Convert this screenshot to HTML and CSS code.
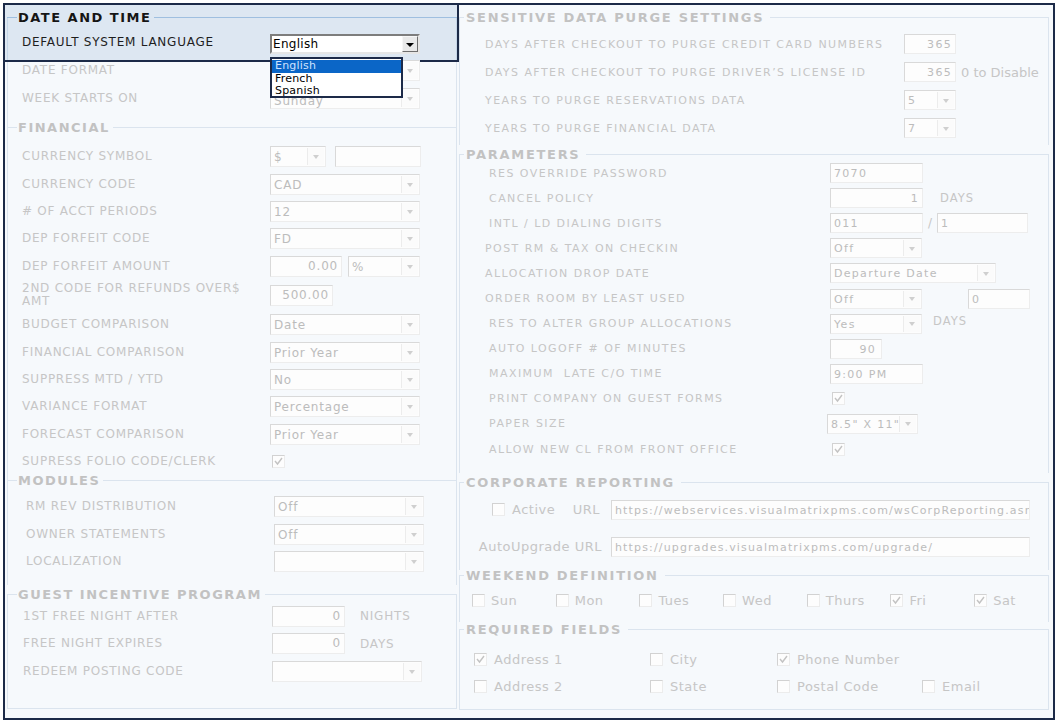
FILE: index.html
```html
<!DOCTYPE html>
<html>
<head>
<meta charset="utf-8">
<title>Settings</title>
<link rel="stylesheet" href="styles.css">
</head>
<body>
<div class="frame">
  <div class="col col-left">
    <div class="hl">
      <div class="hl-box">
        <div class="legend hl-legend"><span>DATE AND TIME</span></div>
        <div class="row lrow hl-row">
          <span class="lbl">DEFAULT SYSTEM LANGUAGE</span>
          <div class="sel hl-sel w150">
            <span class="val">English</span><span class="btn"></span>
            <ul class="dropdown">
              <li class="on">English</li>
              <li>French</li>
              <li>Spanish</li>
            </ul>
          </div>
        </div>
      </div>
    </div>

    <div class="group g-date">
      <div class="rows">
        <div class="row lrow"><span class="lbl">DATE FORMAT</span><div class="sel w150"><span class="val"></span><span class="btn"></span></div></div>
        <div class="row lrow"><span class="lbl">WEEK STARTS ON</span><div class="sel w150"><span class="val low">Sunday</span><span class="btn"></span></div></div>
      </div>
    </div>

    <div class="group g-fin">
      <div class="legend"><span>FINANCIAL</span></div>
      <div class="rows">
        <div class="row frow"><span class="lbl">CURRENCY SYMBOL</span><div class="sel w56"><span class="val">$</span><span class="btn"></span></div><div class="txt w86 ml9"></div></div>
        <div class="row frow"><span class="lbl">CURRENCY CODE</span><div class="sel w150"><span class="val">CAD</span><span class="btn"></span></div></div>
        <div class="row frow"><span class="lbl"># OF ACCT PERIODS</span><div class="sel w150"><span class="val">12</span><span class="btn"></span></div></div>
        <div class="row frow"><span class="lbl">DEP FORFEIT CODE</span><div class="sel w150"><span class="val">FD</span><span class="btn"></span></div></div>
        <div class="row frow"><span class="lbl">DEP FORFEIT AMOUNT</span><div class="txt w72 ra">0.00</div><div class="sel w72 ml6"><span class="val">%</span><span class="btn"></span></div></div>
        <div class="row frow two"><span class="lbl">2ND CODE FOR REFUNDS OVER$<br>AMT</span><div class="txt w63 ra">500.00</div></div>
        <div class="row frow"><span class="lbl">BUDGET COMPARISON</span><div class="sel w150"><span class="val">Date</span><span class="btn"></span></div></div>
        <div class="row frow"><span class="lbl">FINANCIAL COMPARISON</span><div class="sel w150"><span class="val">Prior Year</span><span class="btn"></span></div></div>
        <div class="row frow"><span class="lbl">SUPPRESS MTD / YTD</span><div class="sel w150"><span class="val">No</span><span class="btn"></span></div></div>
        <div class="row frow"><span class="lbl">VARIANCE FORMAT</span><div class="sel w150"><span class="val">Percentage</span><span class="btn"></span></div></div>
        <div class="row frow"><span class="lbl">FORECAST COMPARISON</span><div class="sel w150"><span class="val">Prior Year</span><span class="btn"></span></div></div>
        <div class="row frow"><span class="lbl">SUPRESS FOLIO CODE/CLERK</span><span class="cb on ml2"><svg viewBox="0 0 11 11" width="11" height="11"><polyline points="2,5 4.5,8 9,2"/></svg></span></div>
      </div>
    </div>

    <div class="group g-mod">
      <div class="legend"><span>MODULES</span></div>
      <div class="rows">
        <div class="row mrow"><span class="lbl">RM REV DISTRIBUTION</span><div class="sel w150"><span class="val">Off</span><span class="btn"></span></div></div>
        <div class="row mrow"><span class="lbl">OWNER STATEMENTS</span><div class="sel w150"><span class="val">Off</span><span class="btn"></span></div></div>
        <div class="row mrow"><span class="lbl">LOCALIZATION</span><div class="sel w150"><span class="val"></span><span class="btn"></span></div></div>
      </div>
    </div>

    <div class="group g-guest last">
      <div class="legend"><span>GUEST INCENTIVE PROGRAM</span></div>
      <div class="rows">
        <div class="row grow"><span class="lbl">1ST FREE NIGHT AFTER</span><div class="txt w73 ra">0</div><span class="unit ml15">NIGHTS</span></div>
        <div class="row grow"><span class="lbl">FREE NIGHT EXPIRES</span><div class="txt w73 ra">0</div><span class="unit ml15">DAYS</span></div>
        <div class="row grow"><span class="lbl">REDEEM POSTING CODE</span><div class="sel w150"><span class="val"></span><span class="btn"></span></div></div>
      </div>
    </div>
  </div>

  <div class="col col-right">
    <div class="group g-sens">
      <div class="legend"><span>SENSITIVE DATA PURGE SETTINGS</span></div>
      <div class="rows">
        <div class="row srow"><span class="lbl">DAYS AFTER CHECKOUT TO PURGE CREDIT CARD NUMBERS</span><div class="txt w52 ra">365</div></div>
        <div class="row srow"><span class="lbl">DAYS AFTER CHECKOUT TO PURGE DRIVER’S LICENSE ID</span><div class="txt w52 ra">365</div><span class="note">0 to Disable</span></div>
        <div class="row srow"><span class="lbl">YEARS TO PURGE RESERVATIONS DATA</span><div class="sel w52"><span class="val">5</span><span class="btn"></span></div></div>
        <div class="row srow"><span class="lbl">YEARS TO PURGE FINANCIAL DATA</span><div class="sel w52"><span class="val">7</span><span class="btn"></span></div></div>
      </div>
    </div>

    <div class="group g-par">
      <div class="legend"><span>PARAMETERS</span></div>
      <div class="rows">
        <div class="row prow"><span class="lbl">RES OVERRIDE PASSWORD</span><div class="txt w93">7070</div></div>
        <div class="row prow"><span class="lbl">CANCEL POLICY</span><div class="txt w93 ra">1</div><span class="unit ml17">DAYS</span></div>
        <div class="row prow"><span class="lbl">INTL / LD DIALING DIGITS</span><div class="txt w93">011</div><span class="slash">/</span><div class="txt w91">1</div></div>
        <div class="row prow in"><span class="lbl">POST RM &amp; TAX ON CHECKIN</span><div class="sel w92"><span class="val">Off</span><span class="btn"></span></div></div>
        <div class="row prow in"><span class="lbl">ALLOCATION DROP DATE</span><div class="sel w166"><span class="val">Departure Date</span><span class="btn"></span></div></div>
        <div class="row prow in"><span class="lbl">ORDER ROOM BY LEAST USED</span><div class="sel w92"><span class="val">Off</span><span class="btn"></span></div><div class="txt w62 ml46">0</div></div>
        <div class="row prow"><span class="lbl">RES TO ALTER GROUP ALLOCATIONS</span><div class="sel w92"><span class="val">Yes</span><span class="btn"></span></div><span class="unit ml11 up">DAYS</span></div>
        <div class="row prow"><span class="lbl">AUTO LOGOFF # OF MINUTES</span><div class="txt w52 ra pr5">90</div></div>
        <div class="row prow"><span class="lbl">MAXIMUM&nbsp; LATE C/O TIME</span><div class="txt w93">9:00 PM</div></div>
        <div class="row prow"><span class="lbl">PRINT COMPANY ON GUEST FORMS</span><span class="cb on ml2"><svg viewBox="0 0 11 11" width="11" height="11"><polyline points="2,5 4.5,8 9,2"/></svg></span></div>
        <div class="row prow"><span class="lbl">PAPER SIZE</span><div class="sel w91 mlm3"><span class="val">8.5" X 11"</span><span class="btn"></span></div></div>
        <div class="row prow"><span class="lbl">ALLOW NEW CL FROM FRONT OFFICE</span><span class="cb on ml2"><svg viewBox="0 0 11 11" width="11" height="11"><polyline points="2,5 4.5,8 9,2"/></svg></span></div>
      </div>
    </div>

    <div class="group g-corp">
      <div class="legend"><span>CORPORATE REPORTING</span></div>
      <div class="rows">
        <div class="row crow">
          <div class="clbl"><span class="cb"></span><span class="mix ml7">Active</span><span class="mix push">URL</span></div>
          <div class="txt w419 url">https://webservices.visualmatrixpms.com/wsCorpReporting.asmx</div>
        </div>
        <div class="row crow c2">
          <div class="clbl end"><span class="mix">AutoUpgrade URL</span></div>
          <div class="txt w419 url">https://upgrades.visualmatrixpms.com/upgrade/</div>
        </div>
      </div>
    </div>

    <div class="group g-week">
      <div class="legend"><span>WEEKEND DEFINITION</span></div>
      <div class="rows">
        <div class="row wrow">
          <span class="day"><span class="cb"></span><span class="mix">Sun</span></span>
          <span class="day"><span class="cb"></span><span class="mix">Mon</span></span>
          <span class="day"><span class="cb"></span><span class="mix">Tues</span></span>
          <span class="day"><span class="cb"></span><span class="mix">Wed</span></span>
          <span class="day"><span class="cb"></span><span class="mix">Thurs</span></span>
          <span class="day"><span class="cb on"><svg viewBox="0 0 11 11" width="11" height="11"><polyline points="2,5 4.5,8 9,2"/></svg></span><span class="mix">Fri</span></span>
          <span class="day"><span class="cb on"><svg viewBox="0 0 11 11" width="11" height="11"><polyline points="2,5 4.5,8 9,2"/></svg></span><span class="mix">Sat</span></span>
        </div>
      </div>
    </div>

    <div class="group g-req last">
      <div class="legend"><span>REQUIRED FIELDS</span></div>
      <div class="rows">
        <div class="row rrow">
          <span class="fld f1"><span class="cb on"><svg viewBox="0 0 11 11" width="11" height="11"><polyline points="2,5 4.5,8 9,2"/></svg></span><span class="mix">Address 1</span></span>
          <span class="fld f2"><span class="cb"></span><span class="mix">City</span></span>
          <span class="fld f3"><span class="cb on"><svg viewBox="0 0 11 11" width="11" height="11"><polyline points="2,5 4.5,8 9,2"/></svg></span><span class="mix">Phone Number</span></span>
        </div>
        <div class="row rrow">
          <span class="fld f1"><span class="cb"></span><span class="mix">Address 2</span></span>
          <span class="fld f2"><span class="cb"></span><span class="mix">State</span></span>
          <span class="fld f3"><span class="cb"></span><span class="mix">Postal Code</span></span>
          <span class="fld f4"><span class="cb"></span><span class="mix">Email</span></span>
        </div>
      </div>
    </div>
  </div>
</div>
</body>
</html>
```

FILE: styles.css
```css
* { box-sizing: border-box; }
html, body { margin: 0; padding: 0; background: #ffffff; }
body {
  width: 1058px;
  height: 722px;
  overflow: hidden;
  font-family: "DejaVu Sans", Verdana, sans-serif;
  color: #c4c4c4;
}

.frame {
  margin: 3px 0 0 3px;
  width: 1052px;
  height: 717px;
  border: 2px solid #1c2a48;
  background: #f6f9fc;
  display: grid;
  grid-template-columns: 450px 590px;
  column-gap: 2px;
  padding-left: 2px;
  align-items: start;
}

.col { display: flex; flex-direction: column; }

/* ---------- group boxes ---------- */
.group {
  display: flex;
  flex-direction: column;
  border-left: 1px solid #dbe4ee;
  border-right: 1px solid #dbe4ee;
}
.group.last { border-bottom: 1px solid #dbe4ee; }

.legend {
  display: flex;
  align-items: center;
  height: 16px;
  margin-top: -8px;
  font-size: 13px;
  font-weight: bold;
  letter-spacing: 1.5px;
  color: #c2c2c2;
  white-space: nowrap;
}
.legend::before {
  content: "";
  width: 10px;
  height: 1px;
  margin-left: -1px;
  margin-right: 1px;
  background: #dbe4ee;
}
.legend::after {
  content: "";
  flex: 1;
  height: 1px;
  margin-left: 3px;
  margin-right: -1px;
  background: #dbe4ee;
}
.col-right .legend { font-size: 13px; letter-spacing: 1.7px; }
.col-right .legend::before { width: 5px; margin-right: 2px; }
.col-right .legend::after { margin-left: 6px; }

.rows { display: flex; flex-direction: column; }
.row { display: flex; align-items: center; flex: none; }

.lbl {
  flex: none;
  white-space: nowrap;
  font-size: 12px;
  letter-spacing: 0.75px;
  line-height: 13px;
  color: #c6c6c6;
}

/* ---------- highlight (top-left) ---------- */
.hl {
  margin: -2px 0 0 -4px;
  width: 456px;
  height: 59px;
  border: 2px solid #1c2a48;
  background: #dde7f2;
}
.hl-box {
  margin: 12px 0 0 2px;
  width: 450px;
  height: 43px;
  border-left: 1px solid #c4d6e9;
  border-right: 1px solid #c4d6e9;
  display: flex;
  flex-direction: column;
}
.hl-legend { color: #151515; }
.hl-legend::before, .hl-legend::after { background: #9fbfe0; }
.hl-row { height: 28px; margin-top: 3px; }
.hl-row .lbl { color: #1e1e1e; }

.lrow { height: 28px; }
.lrow .lbl { width: 262px; padding-left: 14px; }
.g-date .rows { margin-top: -6px; padding-bottom: 15px; }

.g-fin .rows { margin-top: 8px; padding-bottom: 5.6px; }
.frow { height: 27.4px; }
.frow.two { height: 31px; }
.frow .lbl { width: 262px; padding-left: 14px; }

.g-mod { margin-bottom: 10px; }
.g-mod .rows { margin-top: 4.25px; padding-bottom: 9px; }
.mrow { height: 27.5px; }
.mrow .lbl { width: 266px; padding-left: 18px; }

.g-guest .rows { margin-top: 0; padding-bottom: 23px; }
.grow { height: 27.5px; }
.grow .lbl { width: 264px; padding-left: 15px; }

/* ---------- right column ---------- */
.col-right > .group:first-child { margin-top: 12px; }
.col-right .lbl { font-size: 11px; letter-spacing: 1.45px; }

.g-sens { margin-bottom: 9px; }
.g-sens .rows { margin-top: 5px; padding-bottom: 3px; }
.srow { height: 28px; }
.srow .lbl { width: 444px; padding-left: 25px; }

.g-par { margin-bottom: 10px; }
.g-par .rows { margin-top: -1.5px; padding-bottom: 11px; }
.prow { height: 25.1px; }
.prow .lbl { width: 370px; padding-left: 29px; }
.prow.in .lbl { padding-left: 25px; }

.g-corp { margin-bottom: 6px; }
.g-corp .rows { margin-top: 4px; padding-bottom: 8px; }
.crow { height: 30px; }
.crow.c2 { margin-top: 7px; }
.clbl {
  width: 144px;
  display: flex;
  align-items: center;
  padding-left: 32px;
  padding-right: 4px;
}
.clbl.end { justify-content: flex-end; padding-left: 0; padding-right: 2px; }
.push { margin-left: auto; }
.crow .txt { margin-left: 7px; height: 21px; }

.g-week { margin-bottom: 8px; }
.g-week .rows { margin-top: 4px; padding-bottom: 8px; }
.wrow { height: 26px; padding-left: 12px; }
.day { width: 83.7px; flex: none; display: flex; align-items: center; }
.day .mix { margin-left: 6px; }

.g-req .rows { margin-top: 8.5px; padding-bottom: 9px; }
.rrow { height: 27px; padding-left: 14px; }
.fld { flex: none; display: flex; align-items: center; }
.fld .mix { margin-left: 7px; }
.f1 { width: 176px; }
.f2 { width: 127px; }
.f3 { width: 145px; }

.mix {
  font-size: 13px;
  letter-spacing: 0.5px;
  color: #c6c6c6;
  white-space: nowrap;
}

/* ---------- controls ---------- */
.sel, .txt {
  flex: none;
  height: 21px;
  border: 1px solid;
  border-color: #d9d9d9 #ededed #ededed #d9d9d9;
  background: #fdfdfd;
  font-size: 12px;
  letter-spacing: 0.8px;
  color: #bcbcbc;
  white-space: nowrap;
  overflow: hidden;
}
.col-right .sel, .col-right .txt { height: 20px; font-size: 11px; letter-spacing: 1.3px; }
.sel { display: flex; }
.sel .val {
  flex: 1;
  min-width: 0;
  padding-left: 3px;
  line-height: 20px;
  overflow: hidden;
}
.sel .val.low { line-height: 24px; }
.sel .btn {
  flex: none;
  width: 17px;
  margin: 1px 1px 1px 0;
  border-left: 1px solid #ececec;
  display: flex;
  align-items: center;
  justify-content: center;
  background: #fbfbfb;
}
.sel .btn::after {
  content: "";
  width: 0;
  height: 0;
  border-left: 3.5px solid transparent;
  border-right: 3.5px solid transparent;
  border-top: 4px solid #cfcfcf;
  margin-top: 1px;
}
.txt { padding: 0 3px; line-height: 19px; }
.txt.ra { text-align: right; }
.txt.pr5 { padding-right: 5px; }
.col-right .txt.url { font-size: 11px; letter-spacing: 1.15px; }

/* highlighted select */
.hl-sel {
  position: relative;
  overflow: visible;
  height: 20px;
  border: 2px solid;
  border-color: #7d7d7d #e6e6e6 #e6e6e6 #7d7d7d;
  background: #ffffff;
  color: #000;
  margin-top: 4px;
  letter-spacing: 0.3px;
}
.hl-sel .val { line-height: 17px; padding-left: 1px; }
.hl-sel .btn {
  width: 16px;
  margin: 0;
  background: #e9e9e9;
  border: 1px solid;
  border-color: #f6f6f6 #6e6e6e #6e6e6e #f6f6f6;
}
.hl-sel .btn::after { border-top-color: #000; border-left-width: 4px; border-right-width: 4px; border-top-width: 4px; }

.dropdown {
  position: absolute;
  left: -2px;
  top: 21px;
  width: 133px;
  height: 41px;
  margin: 0;
  padding: 1px 0 0;
  list-style: none;
  border: 2px solid #1c2a48;
  background: #ffffff;
  z-index: 5;
}
.dropdown li {
  height: 12.6px;
  line-height: 12.6px;
  font-size: 11px;
  letter-spacing: 0.2px;
  color: #000;
  padding-left: 3px;
}
.dropdown li.on { background: #0b66c7; color: #cfe3ff; }

/* checkbox */
.cb {
  flex: none;
  width: 13px;
  height: 13px;
  border: 1px solid;
  border-color: #d2d2d2 #ececec #ececec #d2d2d2;
  background: #fdfdfd;
  display: inline-flex;
  align-items: center;
  justify-content: center;
}
.cb svg polyline { fill: none; stroke: #c3c3c3; stroke-width: 1.4; }

.unit { font-size: 12px; letter-spacing: 0.8px; color: #c6c6c6; }
.col-right .unit { font-size: 11.5px; letter-spacing: 1px; }
.unit.up { margin-top: -6px; }
.note { margin-left: 5px; font-size: 13px; color: #c6c6c6; white-space: nowrap; }
.slash { margin: 0 5px 0 5px; font-size: 12px; color: #c6c6c6; }

/* widths */
.w52 { width: 52px; }
.w56 { width: 56px; }
.w62 { width: 62px; }
.w63 { width: 63px; }
.w72 { width: 72px; }
.w73 { width: 73px; }
.w86 { width: 86px; }
.w91 { width: 91px; }
.w92 { width: 92px; }
.w93 { width: 93px; }
.w150 { width: 150px; }
.w166 { width: 166px; }
.w419 { width: 419px; }

.ml2 { margin-left: 2px; }
.ml6 { margin-left: 6px; }
.ml7 { margin-left: 7px; }
.ml9 { margin-left: 9px; }
.ml11 { margin-left: 11px; }
.ml15 { margin-left: 15px; }
.ml17 { margin-left: 17px; }
.ml46 { margin-left: 46px; }
.mlm3 { margin-left: -3px; }
```
